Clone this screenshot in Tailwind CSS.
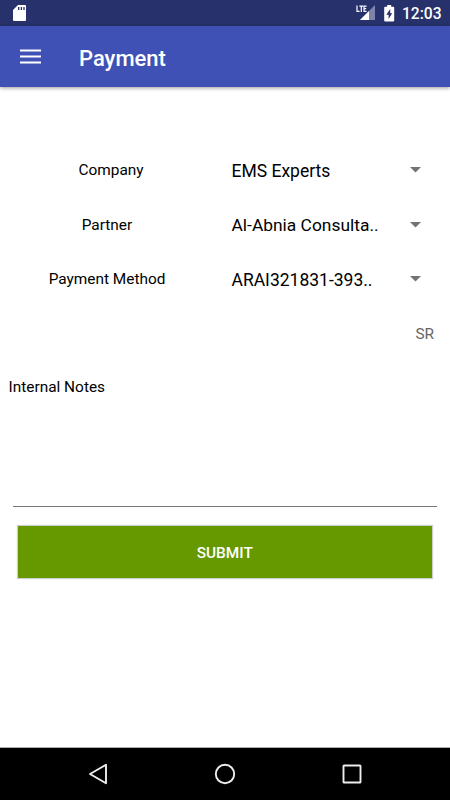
<!DOCTYPE html>
<html lang="en">
<head>
<meta charset="utf-8">
<title>Payment</title>
<script src="https://cdn.jsdelivr.net/npm/@tailwindcss/browser@4"></script>
</head>
<body class="bg-white">
<div class="w-[450px] h-[800px] flex flex-col overflow-hidden bg-white text-black font-[Roboto,sans-serif]">
  <!-- Status bar -->
  <div class="h-[26px] shrink-0 bg-[#27316b] flex items-center text-white pl-[13px] pr-[9px]">
    <svg class="w-[14px] h-[18px]" viewBox="0 0 14 18"><path d="M5 1H12Q13 1 13 2V16Q13 17 12 17H1Q0 17 0 16V6Z" fill="#fff"/><path d="M5.7 3v3M8.4 3v3M11 3v3" stroke="#27316b" stroke-width="1.3"/></svg>
    <svg class="w-[20px] h-[18px] ml-auto" viewBox="0 0 20 18"><path d="M19 1V16H4Z" fill="#7d84aa"/><path d="M13 7V16H4Z" fill="#fff"/><path d="M0 0H11V8H0Z" fill="#27316b"/><path d="M1 1.5V7.3H3.6M3.4 2.1H7.2M5.3 2V8M10.6 2.1H8V7.3H10.6M8 4.7H10.2" fill="none" stroke="#fff" stroke-width="1.2"/></svg>
    <svg class="w-[11px] h-[17px] ml-[8px]" viewBox="0 0 11 17"><path d="M3.2 0H7.2V1.7H9.2Q10.2 1.7 10.2 2.7V15.6Q10.2 16.6 9.2 16.6H1.2Q.2 16.6 .2 15.6V2.7Q.2 1.7 1.2 1.7H3.2Z" fill="#fff"/><path d="M6.2 4L2.3 9.8H4.6V14L8.2 8.2H6.2Z" fill="#27316b"/></svg>
    <span class="ml-[7px] w-[39px] text-[15.6px] leading-[24px] pt-[2px] font-medium">12:03</span>
  </div>
  <!-- App bar -->
  <header class="h-[61px] shrink-0 bg-[#3f51b5] flex items-center text-white pl-[20px] shadow-[0_1px_4px_rgba(0,0,0,0.4)]">
    <svg class="w-[21px] h-[16px]" viewBox="0 0 21 16"><path d="M0 1.5H21M0 7.5H21M0 13.5H21" stroke="#fff" stroke-width="2"/></svg>
    <h1 class="ml-[38px] text-[22px] leading-[30px] font-medium pt-[4px]">Payment</h1>
  </header>
  <!-- Form -->
  <main class="flex-1 flex flex-col pt-[56px]">
    <div class="h-[54.5px] flex items-center">
      <span class="w-[222px] pt-px text-center text-[15.4px]">Company</span>
      <span class="flex-1 pl-[9.5px] pt-px text-[17.5px]">EMS Experts</span>
      <svg class="w-[11px] h-[6px] mr-[29.5px]" viewBox="0 0 11 6"><path d="M0 0H11L5.5 5.5Z" fill="#737373"/></svg>
    </div>
    <div class="h-[54.5px] flex items-center">
      <span class="w-[222px] pr-[8px] pt-px text-center text-[15.4px]">Partner</span>
      <span class="flex-1 pl-[9.5px] text-[17.4px]">Al-Abnia Consulta..</span>
      <svg class="w-[11px] h-[6px] mr-[29.5px]" viewBox="0 0 11 6"><path d="M0 0H11L5.5 5.5Z" fill="#737373"/></svg>
    </div>
    <div class="h-[54.5px] flex items-center">
      <span class="w-[222px] pr-[8px] pt-px text-center text-[15.4px]">Payment Method</span>
      <span class="flex-1 pl-[9.5px] pt-px text-[17.5px]">ARAI321831-393..</span>
      <svg class="w-[11px] h-[6px] mr-[29.5px]" viewBox="0 0 11 6"><path d="M0 0H11L5.5 5.5Z" fill="#737373"/></svg>
    </div>
    <div class="h-[54.5px] flex items-center justify-end pr-[16px] pt-[2px] text-[15.4px] text-[#666]">SR</div>
    <div class="mt-[16px] pl-[8.6px] text-[15.4px] leading-[20px]">Internal Notes</div>
    <div class="mt-[9px] mx-[13px] h-[101px] border-b border-[#777]"></div>
    <button class="mt-[19px] ml-[17.5px] mr-[18px] h-[52px] shrink-0 bg-[#669900] text-white text-[15.4px] font-medium pt-[3px] shadow-[0_0_1px_1px_rgba(80,100,80,0.3)]">SUBMIT</button>
  </main>
  <!-- Navigation bar -->
  <nav class="h-[53px] shrink-0 bg-black border-t border-[#aaa] flex items-center justify-between pl-[87px] pr-[87.5px]">
    <svg class="w-[22px] h-[22px]" viewBox="0 0 22 22"><path d="M19 1.8V20.2L3 11Z" fill="none" stroke="#eee" stroke-width="1.9" stroke-linejoin="round"/></svg>
    <svg class="w-[22px] h-[22px]" viewBox="0 0 22 22"><circle cx="11" cy="11" r="9.2" fill="none" stroke="#eee" stroke-width="1.9"/></svg>
    <svg class="w-[22px] h-[22px]" viewBox="0 0 22 22"><rect x="2.5" y="2.5" width="17" height="17" rx=".6" fill="none" stroke="#eee" stroke-width="1.9"/></svg>
  </nav>
</div>
</body>
</html>
